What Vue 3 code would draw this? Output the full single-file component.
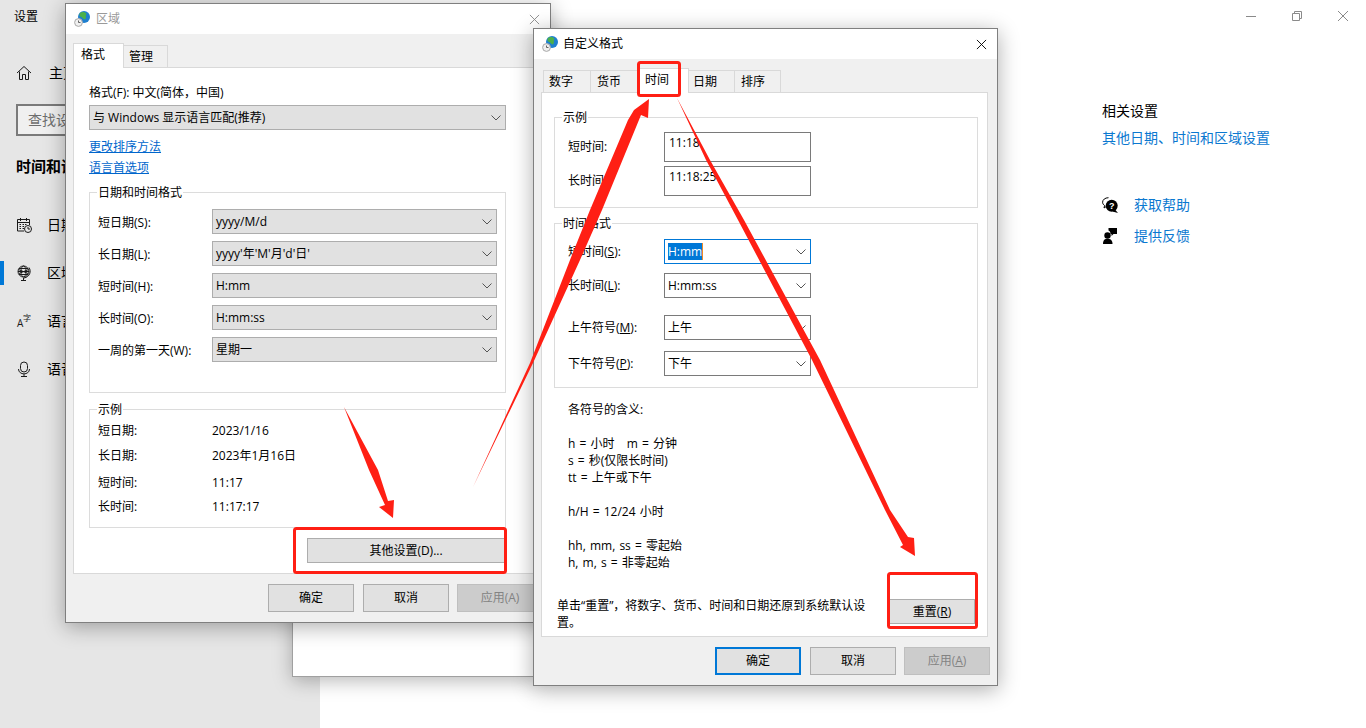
<script setup>
const navItems = [
  { key: 'date', label: '日期' },
  { key: 'region', label: '区域', active: true },
  { key: 'lang', label: '语言' },
  { key: 'mic', label: '语音' }
]
const formatRows = [
  { label: '短日期(S):', value: 'yyyy/M/d' },
  { label: '长日期(L):', value: "yyyy'年'M'月'd'日'" },
  { label: '短时间(H):', value: 'H:mm' },
  { label: '长时间(O):', value: 'H:mm:ss' },
  { label: '一周的第一天(W):', value: '星期一' }
]
const sampleRows = [
  { label: '短日期:', value: '2023/1/16' },
  { label: '长日期:', value: '2023年1月16日' },
  { label: '短时间:', value: '11:17' },
  { label: '长时间:', value: '11:17:17' }
]
const customTabs = [
  { label: '数字', cls: 'p6' },
  { label: '货币', cls: 'p7' },
  { label: '时间', cls: 'p8', active: true },
  { label: '日期', cls: 'p5' },
  { label: '排序', cls: 'p7' }
]
const timeRows = [
  { pre: '短时间(', key: 'S', value: 'H:mm', focus: true, cls: 'r1' },
  { pre: '长时间(', key: 'L', value: 'H:mm:ss', cls: 'r2' },
  { pre: '上午符号(', key: 'M', value: '上午', cls: 'r3' },
  { pre: '下午符号(', key: 'P', value: '下午', cls: 'r4' }
]
const legend = [
  '各符号的含义:',
  '\u00a0',
  'h = 小时   m = 分钟',
  's = 秒(仅限长时间)',
  'tt = 上午或下午',
  '\u00a0',
  'h/H = 12/24 小时',
  '\u00a0',
  'hh, mm, ss = 零起始',
  'h, m, s = 非零起始'
]
</script>

<template>
  <div class="desk">
    <aside class="side">
      <div class="app-title">设置</div>
      <div class="nav-row home">
        <svg class="nav-ico" viewBox="0 0 16 16"><path d="M1 8 8 1.500 15 8M3.500 6.500V14.500H6.500V9.500H9.500V14.500H12.500V6.500" /></svg>
        <span>主页</span>
      </div>
      <div class="search">查找设置</div>
      <div class="side-head">时间和语言</div>
      <div v-for="n in navItems" :key="n.key" class="nav-row">
        <i v-if="n.active" class="nav-mark"></i>
        <svg v-if="n.key === 'date'" class="nav-ico" viewBox="0 0 16 16"><path d="M1.500 2.500H13.500V8M8 14H1.500V2.500M4.500 1V4M10.500 1V4M1.500 5.500H13.500" /><path d="M3.500 7.500h1.500M6.500 7.500h1.500M9 7.500h1.500M3.500 9.500h1.500M6.500 9.500h1.500M3.500 11.500h1.500M6.500 11.500h1.500" /><circle cx="12" cy="12" r="3.500" /><path d="M12 10V12H14" /></svg>
        <svg v-else-if="n.key === 'region'" class="nav-ico" viewBox="0 0 16 16"><circle cx="7.500" cy="6.500" r="5.500" /><ellipse cx="7.500" cy="6.500" rx="2.500" ry="5.500" /><path d="M2 6.500H13M3 3.500H12M3 9.500H12M2.500 4.500 12 8.500M12.500 4.500 3 8.500M13 2.500C15.500 6 14 12 8 13M7.500 13V15M5 15.500H10" /></svg>
        <svg v-else-if="n.key === 'lang'" class="nav-ico lang" viewBox="0 0 16 16"><text x="1" y="14" class="la">A</text><text x="7" y="8" class="lz">字</text></svg>
        <svg v-else class="nav-ico" viewBox="0 0 16 16"><rect x="4.500" y="1" width="7" height="10" rx="3.500" /><path d="M2.500 8C2.500 14.500 13.500 14.500 13.500 8M8 13V15.500M5 15.500H11" /></svg>
        <span>{{ n.label }}</span>
      </div>
    </aside>

    <main class="content">
      <div class="win-ctrl">
        <span class="ctrl"><svg viewBox="0 0 12 12"><path d="M1 6.500H11" /></svg></span>
        <span class="ctrl"><svg viewBox="0 0 12 12"><path d="M1.500 3.500H8.500V10.500H1.500ZM3.500 3.500V1.500H10.500V8.500H8.500" /></svg></span>
        <span class="ctrl"><svg viewBox="0 0 12 12"><path d="M1 1 11 11M11 1 1 11" /></svg></span>
      </div>
      <div class="rail">
        <div class="rail-head">相关设置</div>
        <div class="rail-link first">其他日期、时间和区域设置</div>
        <div class="rail-item help">
          <svg viewBox="0 0 16 16"><path d="M6.500 .7C3 .7 .6 2.800 .6 5.200c0 1.400.8 2.600 2 3.300L2 11l2.600-1.700" fill="#fff" stroke="#000" stroke-width="1" /><circle cx="9.700" cy="8.700" r="6" fill="#000" /><path d="M13 12.500 16 16 10.500 14.500Z" fill="#000" /><text x="9.700" y="12" text-anchor="middle" class="q">?</text></svg>
          <span>获取帮助</span>
        </div>
        <div class="rail-item fb">
          <svg viewBox="0 0 16 16"><circle cx="5.500" cy="7.500" r="3.200" fill="#000" /><path d="M1 16C1 12 3 10.800 5.500 10.800S10.500 12 10.500 16Z" fill="#000" /><path d="M6.500 0H15V6H11.500L9.500 8V6H8.500C8.500 4 7.800 3 6.500 2.500Z" fill="#000" /></svg>
          <span>提供反馈</span>
        </div>
      </div>
    </main>

    <div class="back-win"></div>

    <section class="dlg dlg-a">
      <header class="dlg-title inactive">
        <svg class="globe" viewBox="0 0 16 16">
          <circle cx="10" cy="6" r="6" fill="#1f7fcf" />
          <path d="M6.500 1.500C9 .5 11 1 12.500 2.500 11 5 13 6.500 11 8.500 8.500 8 8.500 6 6 5.500 5 4 5.500 2.500 6.500 1.500Z" fill="#4cb04a" />
          <circle cx="4.500" cy="11.500" r="3.900" fill="#f0f0f0" stroke="#a8a8a8" />
          <path d="M4.500 9.500V11.500H6.500" fill="none" stroke="#666" />
        </svg>
        <span class="dlg-name">区域</span>
        <svg class="dlg-close" viewBox="0 0 12 12"><path d="M1 1 11 11M11 1 1 11" /></svg>
      </header>
      <div class="dlg-body">
        <div class="tabs">
          <div class="tab active a1">格式</div>
          <div class="tab a2">管理</div>
        </div>
        <div class="panel panel-a">
          <div class="fmt-label">格式(F): 中文(简体，中国)</div>
          <div class="sel gray fmt-sel">
            <span>与 Windows 显示语言匹配(推荐)</span>
            <svg class="chev" viewBox="0 0 10 6"><path d="M.5 .5 5 5 9.500 .5" /></svg>
          </div>
          <a class="lnk l1">更改排序方法</a>
          <a class="lnk l2">语言首选项</a>

          <div class="group fmt-group">
            <div class="legend">日期和时间格式</div>
            <div v-for="r in formatRows" :key="r.label" class="fmt-row">
              <span class="fmt-name low">{{ r.label }}</span>
              <div class="sel gray fmt-val">
                <span>{{ r.value }}</span>
                <svg class="chev" viewBox="0 0 10 6"><path d="M.5 .5 5 5 9.500 .5" /></svg>
              </div>
            </div>
          </div>

          <div class="group sample-group">
            <div class="legend">示例</div>
            <div v-for="r in sampleRows" :key="r.label" class="sample-row">
              <span class="fmt-name">{{ r.label }}</span>
              <span>{{ r.value }}</span>
            </div>
          </div>

          <button class="btn more">其他设置(D)...</button>
        </div>
        <div class="foot foot-a">
          <button class="btn act">确定</button>
          <button class="btn act">取消</button>
          <button class="btn act off">应用(A)</button>
        </div>
      </div>
    </section>

    <section class="dlg dlg-b">
      <header class="dlg-title">
        <svg class="globe" viewBox="0 0 16 16">
          <circle cx="10" cy="6" r="6" fill="#1f7fcf" />
          <path d="M6.500 1.500C9 .5 11 1 12.500 2.500 11 5 13 6.500 11 8.500 8.500 8 8.500 6 6 5.500 5 4 5.500 2.500 6.500 1.500Z" fill="#4cb04a" />
          <circle cx="4.500" cy="11.500" r="3.900" fill="#f0f0f0" stroke="#a8a8a8" />
          <path d="M4.500 9.500V11.500H6.500" fill="none" stroke="#666" />
        </svg>
        <span class="dlg-name">自定义格式</span>
        <svg class="dlg-close" viewBox="0 0 12 12"><path d="M1 1 11 11M11 1 1 11" /></svg>
      </header>
      <div class="dlg-body">
        <div class="tabs tabs-b">
          <div v-for="t in customTabs" :key="t.label" class="tab tb" :class="[t.cls, { active: t.active }]">{{ t.label }}</div>
        </div>
        <div class="panel panel-b">
          <div class="group ex-group">
            <div class="legend">示例</div>
            <div class="ex-row">
              <span class="time-name">短时间:</span>
              <div class="ex-box">11:18</div>
            </div>
            <div class="ex-row">
              <span class="time-name">长时间:</span>
              <div class="ex-box">11:18:25</div>
            </div>
          </div>

          <div class="group time-group">
            <div class="legend">时间格式</div>
            <div v-for="r in timeRows" :key="r.key" class="time-row" :class="r.cls">
              <span class="time-name">{{ r.pre }}<u>{{ r.key }}</u>):</span>
              <div class="sel light" :class="{ focus: r.focus }">
                <span v-if="r.focus" class="picked">{{ r.value }}</span>
                <span v-else>{{ r.value }}</span>
                <svg class="chev" viewBox="0 0 10 6"><path d="M.5 .5 5 5 9.500 .5" /></svg>
              </div>
            </div>
          </div>

          <div class="legend-text">
            <div v-for="(l, i) in legend" :key="i">{{ l }}</div>
          </div>

          <div class="reset-row">
            <p class="note">单击“重置”，将数字、货币、时间和日期还原到系统默认设<br />置。</p>
            <button class="btn act reset">重置(<u>R</u>)</button>
          </div>
        </div>
        <div class="foot foot-b">
          <button class="btn act primary">确定</button>
          <button class="btn act">取消</button>
          <button class="btn act off">应用(<u>A</u>)</button>
        </div>
      </div>
    </section>

    <svg class="marks" viewBox="0 0 1366 728">
      <rect class="box" x="294.500" y="528.500" width="211" height="44" rx="2" />
      <rect class="box" x="638.500" y="62.500" width="41" height="33" rx="2" />
      <rect class="box" x="888.500" y="573.500" width="88" height="54" rx="2" />
      <polygon class="arr" points="344,407 369,470 385,505 379,507 393,518 394,500 388,501 378,470" />
      <polygon class="arr" points="473,487 530,363 570,260 590,210 628,120 634,110 649,99 648,118 641,115 602,210 580,260 533,363" />
      <polygon class="arr" points="677,98 706,160 738,220 812,360 885,510 903,545 900,547 915,556 914,538 908,537 890,510 820,360 744,220 710,160" />
    </svg>
  </div>
</template>

<style>
html, body { margin: 0; background: #fff; overflow: hidden; }
</style>

<style scoped>
.desk {
  position: relative;
  width: 1366px;
  height: 728px;
  overflow: hidden;
  display: flex;
  background: #fff;
  color: #000;
  font: 12px/18px "Open Sans", "Noto Sans CJK SC", sans-serif;
}
.side { width: 320px; height: 728px; background: #e6e6e6; flex: none; }
.app-title { height: 34px; line-height: 34px; padding-left: 14px; }
.nav-row {
  position: relative;
  height: 48px;
  display: flex;
  align-items: center;
  padding-left: 16px;
  gap: 15px;
  font-size: 14px;
}
.nav-row.home { gap: 17px; margin-top: 15px; }
.nav-ico { width: 16px; height: 16px; fill: none; stroke: #1a1a1a; stroke-width: 1; flex: none; }
.lang { stroke: none; overflow: visible; }
.la { font-size: 10px; fill: #1a1a1a; }
.lz { font-size: 8px; fill: #1a1a1a; }
.nav-mark { position: absolute; left: 0; top: 12px; width: 4px; height: 24px; background: #0078d7; }
.search {
  margin: 7px 0 0 16px;
  width: 280px;
  height: 32px;
  box-sizing: border-box;
  border: 2px solid #7a7a7a;
  background: #f0f0f0;
  color: #6e6e6e;
  font-size: 14px;
  line-height: 27px;
  padding-left: 10px;
}
.side-head { margin: 20px 0 25px 16px; font-size: 15px; font-weight: 700; line-height: 20px; }

.content { flex: 1; position: relative; }
.win-ctrl { display: flex; justify-content: flex-end; height: 32px; }
.ctrl { width: 46px; display: flex; align-items: center; justify-content: center; }
.ctrl svg { width: 12px; height: 12px; fill: none; stroke: #8a8a8a; stroke-width: 1; margin-bottom: 1px; }
.rail { margin: 69px 0 0 782px; font-size: 14px; line-height: 20px; }
.rail-link, .rail-item span { color: #0b78d0; }
.rail-link.first { margin-top: 7px; }
.rail-item { display: flex; align-items: center; gap: 16px; }
.rail-item svg { width: 16px; height: 16px; flex: none; }
.rail-item.help { margin-top: 47px; }
.rail-item.fb { margin-top: 11px; }
.q { fill: #fff; font-size: 9px; font-weight: 700; font-family: "Liberation Sans", sans-serif; }

.back-win {
  position: absolute;
  left: 292px;
  top: 40px;
  width: 245px;
  height: 637px;
  box-sizing: border-box;
  background: #fff;
  border: 1px solid #a0a0a0;
  border-top: 0;
  box-shadow: 0 4px 18px rgba(0, 0, 0, .28);
}

.dlg {
  position: absolute;
  box-sizing: border-box;
  border: 1px solid #7f7f7f;
  background: #f0f0f0;
  box-shadow: 0 4px 20px rgba(0, 0, 0, .32);
}
.dlg-a { left: 65px; top: 3px; width: 486px; height: 620px; }
.dlg-b { left: 533px; top: 28px; width: 465px; height: 658px; }
.dlg-title { height: 30px; background: #fff; display: flex; align-items: center; position: relative; }
.globe { width: 16px; height: 16px; margin-left: 8px; flex: none; }
.dlg-name { margin-left: 6px; }
.dlg-b .dlg-name { margin-left: 5px; }
.inactive .dlg-name { color: #9a9a9a; }
.dlg-close { margin-left: auto; width: 11px; height: 11px; margin-right: 10px; fill: none; stroke: #000; stroke-width: 1; }
.inactive .dlg-close { stroke: #8a8a8a; }
.dlg-body { padding: 9px 7px 0; }

.tabs { display: flex; align-items: flex-end; height: 24px; position: relative; z-index: 1; }
.tab {
  box-sizing: border-box;
  height: 22px;
  border: 1px solid #d9d9d9;
  border-bottom: 0;
  border-left: 0;
  background: #f0f0f0;
  display: flex;
  align-items: center;
  margin-bottom: 0;
}
.tab.active {
  height: 25px;
  margin-bottom: -1px;
  background: #fff;
  border-left: 1px solid #d9d9d9;
  padding-bottom: 2px;
}
.a1 { width: 51px; padding-left: 7px; }
.a2 { width: 44px; padding-left: 5px; }
.tabs-b { padding-left: 2px; }
.tb { width: 48px; height: 22px; border-left: 1px solid #d9d9d9; margin-right: -1px; }
.tb.active { width: 52px; }
.tb:nth-child(4), .tb:nth-child(5) { width: 47px; }
.p5 { padding-left: 4px; }
.p6 { padding-left: 5px; }
.p7 { padding-left: 6px; }
.p8 { padding-left: 7px; }

.panel {
  box-sizing: border-box;
  background: #fff;
  border: 1px solid #d9d9d9;
  display: flex;
  flex-direction: column;
  align-items: flex-start;
}
.panel-a { width: 470px; height: 507px; padding: 16px 0 0 15px; }
.panel-b { width: 447px; height: 545px; padding: 24px 0 0 12px; }

.sel {
  box-sizing: border-box;
  height: 25px;
  border: 1px solid #adadad;
  display: flex;
  align-items: center;
  justify-content: space-between;
  padding: 0 4px 0 3px;
}
.gray { background: #e1e1e1; }
.light { background: #fff; border-color: #7a7a7a; width: 147px; }
.focus { border-color: #0078d7; }
.picked {
  background: #0078d7;
  color: #fff;
  border-right: 1px solid #f08a24;
  line-height: 17px;
}
.chev { width: 10px; height: 6px; fill: none; stroke: #555; stroke-width: 1; flex: none; }

.fmt-label { height: 18px; }
.fmt-sel { width: 417px; margin-top: 3px; }
.lnk { color: #0066cc; text-decoration: underline; }
.l1 { margin-top: 8px; }
.l2 { margin-top: 3px; }

.group { position: relative; box-sizing: border-box; border: 1px solid #dcdcdc; }
.legend { position: absolute; left: 7px; top: -9px; background: #fff; padding: 0 1px; }
.fmt-group {
  width: 417px;
  height: 201px;
  margin-top: 15px;
  padding: 16px 0 0 8px;
  display: flex;
  flex-direction: column;
  gap: 7px;
}
.fmt-row { display: flex; align-items: center; }
.fmt-name { width: 114px; flex: none; }
.low { padding-top: 2px; }
.fmt-val { width: 285px; }
.sample-group { width: 417px; height: 119px; margin-top: 16px; padding: 8px 0 0 8px; }
.sample-row { display: flex; align-items: center; height: 25px; }
.sample-row:nth-of-type(4) { margin-top: 2px; }
.sample-row:nth-of-type(5) { margin-top: -1px; }

.btn {
  box-sizing: border-box;
  font: inherit;
  color: #000;
  background: #e1e1e1;
  border: 1px solid #adadad;
  padding: 0;
}
.more { width: 198px; height: 25px; margin: 10px 0 0 218px; }
.foot { display: flex; justify-content: flex-end; gap: 9px; margin-top: 10px; }
.act { width: 86px; height: 28px; }
.off { background: #ccc; border-color: #bfbfbf; color: #838383; margin-left: -1px; }
.primary { border: 2px solid #0078d7; }

.ex-group { width: 424px; height: 91px; padding: 14px 0 0 13px; }
.ex-row { display: flex; align-items: center; margin-bottom: 4px; }
.time-name { width: 96px; flex: none; }
.ex-box {
  box-sizing: border-box;
  width: 147px;
  height: 30px;
  border: 1px solid #7a7a7a;
  padding: 1px 0 0 4px;
}
.time-group { width: 424px; height: 165px; margin-top: 15px; padding: 15px 0 0 13px; }
.time-row { display: flex; align-items: center; }
.r2 { margin-top: 9px; }
.r3 { margin-top: 17px; }
.r4 { margin-top: 11px; }
.legend-text { margin-top: 13px; padding-left: 14px; line-height: 17px; white-space: pre; word-spacing: 1px; }
.reset-row { width: 418px; margin: 26px 0 0 3px; display: flex; justify-content: space-between; align-items: flex-start; }
.note { margin: 0; line-height: 17px; white-space: nowrap; }
.reset { height: 25px; margin-top: 2px; }

.marks { position: absolute; inset: 0; width: 1366px; height: 728px; pointer-events: none; z-index: 5; }
.box { fill: none; stroke: #ff1f14; stroke-width: 3; }
.arr { fill: #ff1f14; }
</style>
